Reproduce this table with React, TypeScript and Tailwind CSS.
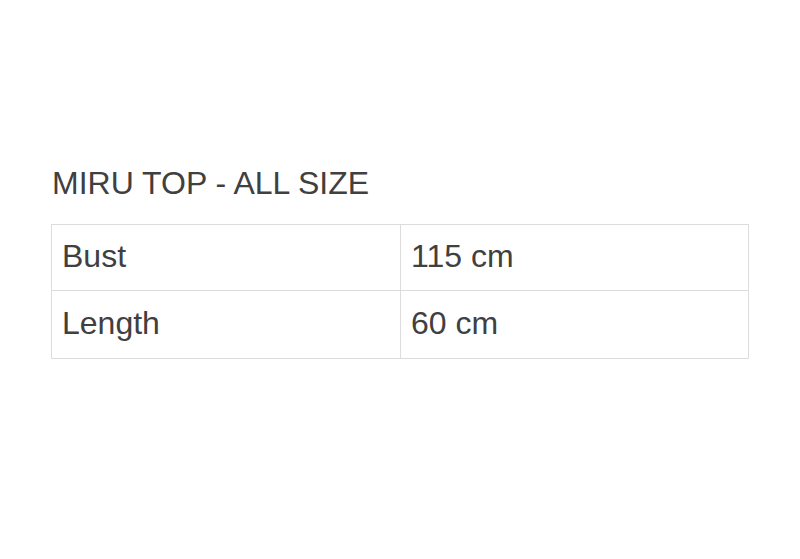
export default function App() {
  const rows = [
    ["Bust", "115 cm"],
    ["Length", "60 cm"],
  ];
  return (
    <div className="w-[800px] h-[559px] bg-white font-['Liberation_Sans',Arial,sans-serif] text-[#404040]">
      <div className="pt-[163px] px-[51px]">
        <h2 className="text-[32px] leading-[40px] pl-[1px] font-normal">MIRU TOP - ALL SIZE</h2>
        <table className="mt-[21px] w-[698px] border-collapse text-[32px]">
          <tbody>
            {rows.map(([k, v], i) => (
              <tr key={k}>
                <td className={`w-[349px] ${i === 0 ? "h-[66px]" : "h-[68px]"} border border-[#dcdcdc] px-[10px] pb-[3px] align-middle`}>{k}</td>
                <td className={`${i === 0 ? "h-[66px]" : "h-[68px]"} border border-[#dcdcdc] px-[10px] pb-[3px] align-middle`}>{v}</td>
              </tr>
            ))}
          </tbody>
        </table>
      </div>
    </div>
  );
}
